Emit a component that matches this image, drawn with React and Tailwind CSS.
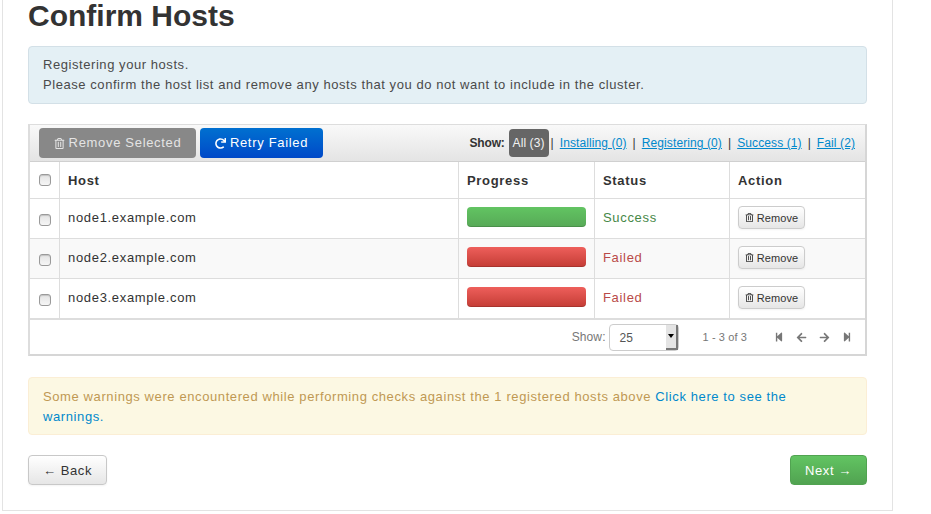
import React from "react";
import { FaRegTrashAlt, FaRedo, FaStepBackward, FaStepForward, FaArrowLeft, FaArrowRight } from "react-icons/fa";

const hosts = [
    { name: "node1.example.com", status: "Success" },
    { name: "node2.example.com", status: "Failed" },
    { name: "node3.example.com", status: "Failed" },
];

const filters = ["Installing (0)", "Registering (0)", "Success (1)", "Fail (2)"];

function Checkbox() {
    return <span className="block w-[12px] h-[12px] rounded-[3px] border border-[#9a9a9a] bg-gradient-to-b from-[#e4e4e4] to-[#f6f6f6] shadow-[inset_0_1px_1px_rgba(0,0,0,0.15)]" />;
}

function HostRow({ host, odd }) {
    const ok = host.status === "Success";
    return (
        <div className={`flex h-[40px] border-b border-[#dddddd] ${odd ? "bg-[#f9f9f9]" : "bg-white"}`}>
            <div className="w-[30px] flex items-center justify-center border-r border-[#dddddd] pt-[2px]">
                <Checkbox />
            </div>
            <div className="w-[399px] flex items-center pl-[8px] pb-[2px] border-r border-[#dddddd]">{host.name}</div>
            <div className="w-[136px] pl-[8px] pt-[8px] border-r border-[#dddddd]">
                <div className={`w-[119px] h-[20px] rounded-[4px] bg-gradient-to-b shadow-[inset_0_-1px_0_rgba(0,0,0,0.15)] ${ok ? "from-[#62c462] to-[#57a957]" : "from-[#ee5f5b] to-[#c43c35]"}`} />
            </div>
            <div className={`w-[135px] flex items-center pl-[8px] pb-[2px] border-r border-[#dddddd] ${ok ? "text-[#468847]" : "text-[#b94a48]"}`}>{host.status}</div>
            <div className="flex-1 flex items-center pl-[8px] pb-[2px]">
                <button className="flex items-center justify-center gap-[3px] w-[67px] h-[23px] rounded-[4px] border border-[#cccccc] bg-gradient-to-b from-white to-[#e6e6e6] text-[11px] tracking-[0.1px] text-[#333333] shadow-[0_1px_2px_rgba(0,0,0,0.05)]">
                    <FaRegTrashAlt size={9} />
                    Remove
                </button>
            </div>
        </div>
    );
}

export default function App() {
    return (
        <div className="h-[514px] overflow-hidden bg-white font-['Liberation_Sans',Arial,sans-serif] text-[13px] leading-[20px] tracking-[0.6px] text-[#333333]">
            <div className="ml-[2px] w-[891px] h-[511px] border-x border-b border-[#e3e3e3] px-[25px]">
                <h1 className="h-[46px] text-[30px] leading-[31px] font-bold tracking-normal">Confirm Hosts</h1>

                <div className="h-[58px] rounded-[4px] border border-[#d3e0e7] bg-[#e4f0f5] pl-[14px] pr-[35px] pt-[8px] tracking-[0.56px] text-[#4a4a4a]">
                    <p>Registering your hosts.</p>
                    <p>Please confirm the host list and remove any hosts that you do not want to include in the cluster.</p>
                </div>

                <div className="mt-[20px] h-[232px] border-2 border-t border-[#d6d6d6] border-t-[#dddddd] border-l-[#dddddd] tracking-[0.68px]">
                    <div className="flex items-start justify-between h-[37px] pt-[3px] pl-[9px] pr-[10px] bg-gradient-to-b from-[#f9f9f9] to-[#e4e4e4] border-b border-[#d0d0d0]">
                        <div className="flex gap-[4px]">
                            <button className="flex items-center justify-center gap-[4px] w-[157px] h-[30px] rounded-[4px] bg-[#888888] text-[#e4e4e4]">
                                <FaRegTrashAlt size={11} />
                                Remove Selected
                            </button>
                            <button className="flex items-center justify-center gap-[4px] w-[123px] h-[30px] rounded-[4px] bg-gradient-to-b from-[#0070d0] to-[#0048c8] text-white">
                                <FaRedo size={11} />
                                Retry Failed
                            </button>
                        </div>
                        <div className="flex items-center h-[30px] text-[12px] tracking-[0.1px]">
                            <span className="mr-[4px] font-bold tracking-[-0.2px]">Show:</span>
                            <span className="flex items-center justify-center w-[40px] h-[28px] rounded-[4px] bg-[#666666] text-[#f2f2f2]">All (3)</span>
                            <span className="ml-[2px]">|</span>
                            {filters.map((f, i) => (
                                <React.Fragment key={f}>
                                    {i > 0 && <span className="mx-[6px]">|</span>}
                                    <a className={`text-[#0088cc] underline ${i === 0 ? "ml-[6px]" : ""}`}>{f}</a>
                                </React.Fragment>
                            ))}
                        </div>
                    </div>

                    <div className="flex h-[37px] border-b border-[#dddddd] font-bold">
                        <div className="w-[30px] flex items-center justify-center border-r border-[#dddddd]">
                            <Checkbox />
                        </div>
                        <div className="w-[399px] flex items-center pl-[8px] pt-[1px] border-r border-[#dddddd]">Host</div>
                        <div className="w-[136px] flex items-center pl-[8px] pt-[1px] border-r border-[#dddddd]">Progress</div>
                        <div className="w-[135px] flex items-center pl-[8px] pt-[1px] border-r border-[#dddddd]">Status</div>
                        <div className="flex-1 flex items-center pl-[8px] pt-[1px]">Action</div>
                    </div>

                    {hosts.map((h, i) => <HostRow key={h.name} host={h} odd={i === 1} />)}

                    <div className="flex items-center justify-end h-[35px] border-t border-[#dddddd] pr-[13px] text-[11px] tracking-[0.1px] text-[#777777]">
                        <span className="mr-[3px] text-[12px]">Show:</span>
                        <div className="flex items-center justify-between w-[70px] h-[27px] rounded-[4px] border border-[#cccccc] bg-white pl-[10px] pt-[1px] text-[12px] text-[#555555]">
                            25
                            <span className="flex items-center justify-center w-[12px] h-[25px] -mt-[1px] bg-[#e4e4e4] border-r-2 border-b-2 border-[#777777]">
                                <span className="w-0 h-0 border-x-[3px] border-t-[4px] border-x-transparent border-t-black" />
                            </span>
                        </div>
                        <span className="ml-[24px] mr-[27px]">1 - 3 of 3</span>
                        <div className="flex items-center gap-[12px] text-[#777777]">
                            <FaStepBackward size={10} />
                            <FaArrowLeft size={11} />
                            <FaArrowRight size={11} />
                            <FaStepForward size={10} />
                        </div>
                    </div>
                </div>

                <div className="mt-[21px] h-[58px] rounded-[4px] border border-[#fbeed5] bg-[#fcf8e3] pl-[14px] pr-[35px] pt-[9px] text-[#c09853]">
                    Some warnings were encountered while performing checks against the 1 registered hosts above <a className="text-[#0088cc]">Click here to see the warnings.</a>
                </div>

                <div className="mt-[20px] flex justify-between">
                    <button className="w-[79px] h-[30px] pt-[1px] rounded-[4px] border border-[#c8c8c8] bg-gradient-to-b from-white to-[#e6e6e6] shadow-[0_1px_2px_rgba(0,0,0,0.05)]">← Back</button>
                    <button className="w-[77px] h-[30px] pt-[1px] rounded-[4px] border border-[#51a351] bg-gradient-to-b from-[#62c462] to-[#51a351] text-white">Next →</button>
                </div>
            </div>
        </div>
    );
}
